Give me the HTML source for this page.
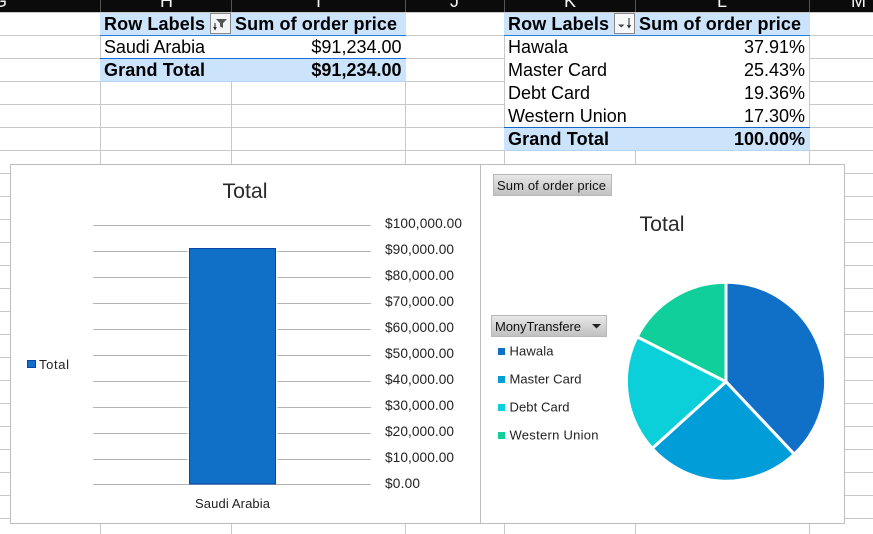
<!DOCTYPE html>
<html><head><meta charset="utf-8"><style>
html,body{margin:0;padding:0;background:#fff;width:873px;height:534px;overflow:hidden}
svg{display:block}
text{font-family:"Liberation Sans",sans-serif}
.t{font-size:18px;fill:#000}
.b{font-size:18px;font-weight:bold;fill:#000}
.h{font-size:18px;fill:#f4f4f4}
.a{font-size:13.7px;fill:#222}
.l{font-size:13px;fill:#222}
</style></head><body>
<svg width="873" height="534" viewBox="0 0 873 534" xmlns="http://www.w3.org/2000/svg">
<defs><linearGradient id="g" x1="0" y1="0" x2="0" y2="1"><stop offset="0" stop-color="#e8e8e8"/><stop offset="1" stop-color="#c0c0c0"/></linearGradient></defs>
<rect width="873" height="534" fill="#fff"/>
<g stroke="#c8c8c8" stroke-width="1" shape-rendering="crispEdges">
<path d="M0 35.5H873M0 58.5H873M0 81.5H873M0 104.5H873M0 127.5H873M0 150.5H873M0 173.5H873M0 196.5H873M0 219.5H873M0 242.5H873M0 265.5H873M0 288.5H873M0 311.5H873M0 334.5H873M0 357.5H873M0 380.5H873M0 403.5H873M0 426.5H873M0 449.5H873M0 472.5H873M0 495.5H873M0 518.5H873"/>
<path d="M100.5 13V534M231.5 13V534M405.5 13V534M504.5 13V534M635.5 13V534M809.5 13V534"/>
</g>
<rect x="0" y="0" width="873" height="12" fill="#0b0b0b"/>
<rect x="0" y="12" width="873" height="1" fill="#c8c8c8"/>
<path d="M100.5 0V12M231.5 0V12M405.5 0V12M504.5 0V12M635.5 0V12M809.5 0V12" stroke="#555" shape-rendering="crispEdges"/>
<text class="h" x="-7" y="7">G</text><text class="h" x="160" y="7">H</text><text class="h" x="316" y="7">I</text><text class="h" x="450" y="7">J</text><text class="h" x="564" y="7">K</text><text class="h" x="717" y="7">L</text><text class="h" x="851" y="7">M</text>

<!-- table 1 -->
<rect x="100" y="13" width="306" height="22" fill="#cbe3fb"/>
<rect x="101" y="36" width="305" height="22" fill="#fff"/>
<rect x="100" y="59" width="306" height="22" fill="#cbe3fb"/>
<rect x="100" y="35" width="306" height="1" fill="#2a7fe0"/>
<rect x="100" y="58" width="306" height="1" fill="#1470e0"/>
<rect x="100" y="81" width="306" height="1" fill="#b5d3f2"/>
<text class="b" x="104" y="30" textLength="101">Row Labels</text>
<text class="b" x="235" y="30" textLength="162">Sum of order price</text>
<text class="t" x="104" y="53" textLength="101">Saudi Arabia</text>
<text class="t" x="401.5" y="53" text-anchor="end">$91,234.00</text>
<text class="b" x="104" y="76" textLength="101">Grand Total</text>
<text class="b" x="401.5" y="76" text-anchor="end">$91,234.00</text>
<rect x="210.5" y="13.5" width="20" height="20" fill="#f3f4f6" stroke="#8a8a8a" shape-rendering="crispEdges"/>
<path d="M216 19h11l-4 4.2V28l-3-1.6v-3.2z" fill="#555"/>
<path d="M215 23v6M213.7 27l1.3 2.4 1.3-2.4" stroke="#222" stroke-width="1" fill="none"/>

<!-- table 2 -->
<rect x="504" y="13" width="306" height="22" fill="#cbe3fb"/>
<rect x="505" y="36" width="304" height="91" fill="#fff"/>
<rect x="504" y="128" width="306" height="22" fill="#cbe3fb"/>
<rect x="504" y="35" width="306" height="1" fill="#2a7fe0"/>
<rect x="504" y="127" width="306" height="1" fill="#1566c8"/>
<rect x="504" y="150" width="306" height="1" fill="#b5d3f2"/>
<text class="b" x="508" y="30" textLength="101">Row Labels</text>
<text class="b" x="639" y="30" textLength="162">Sum of order price</text>
<text class="t" x="508" y="53">Hawala</text><text class="t" x="805" y="53" text-anchor="end">37.91%</text>
<text class="t" x="508" y="76">Master Card</text><text class="t" x="805" y="76" text-anchor="end">25.43%</text>
<text class="t" x="508" y="99">Debt Card</text><text class="t" x="805" y="99" text-anchor="end">19.36%</text>
<text class="t" x="508" y="122">Western Union</text><text class="t" x="805" y="122" text-anchor="end">17.30%</text>
<text class="b" x="508" y="145" textLength="101">Grand Total</text><text class="b" x="805" y="145" text-anchor="end">100.00%</text>
<rect x="614.5" y="13.5" width="20" height="20" fill="#f7f8fa" stroke="#8a8a8a" shape-rendering="crispEdges"/>
<path d="M618 24.5h6.5l-3.2 3z" fill="#444"/>
<path d="M629 18v9M627.4 25l1.6 2.6 1.6-2.6" stroke="#222" stroke-width="1" fill="none"/>

<!-- chart -->
<rect x="10.5" y="164.5" width="834" height="359" fill="#fff" stroke="#bdbdbd"/>
<path d="M480.5 165V523" stroke="#bdbdbd" shape-rendering="crispEdges"/>
<text x="245" y="198" text-anchor="middle" font-size="21" fill="#2a2a2a" textLength="45" lengthAdjust="spacingAndGlyphs">Total</text>
<g stroke="#b4b4b4" stroke-width="1" shape-rendering="crispEdges">
<path d="M93 225.5H371M93 251.5H371M93 277.5H371M93 303.5H371M93 329.5H371M93 355.5H371M93 381.5H371M93 407.5H371M93 433.5H371M93 459.5H371M93 484.5H371"/>
</g>
<rect x="189.5" y="248.5" width="86" height="235.5" fill="#106fc6" stroke="#0b45a8"/>
<rect x="187" y="249" width="2" height="235" fill="#fff" opacity="0.6"/><rect x="276" y="249" width="2" height="235" fill="#fff" opacity="0.6"/>
<g>
<text class="a" x="385" y="228" textLength="77">$100,000.00</text>
<text class="a" x="385" y="254" textLength="69">$90,000.00</text>
<text class="a" x="385" y="280" textLength="69">$80,000.00</text>
<text class="a" x="385" y="306" textLength="69">$70,000.00</text>
<text class="a" x="385" y="332" textLength="69">$60,000.00</text>
<text class="a" x="385" y="358" textLength="69">$50,000.00</text>
<text class="a" x="385" y="384" textLength="69">$40,000.00</text>
<text class="a" x="385" y="410" textLength="69">$30,000.00</text>
<text class="a" x="385" y="436" textLength="69">$20,000.00</text>
<text class="a" x="385" y="462" textLength="69">$10,000.00</text>
<text class="a" x="385" y="488" textLength="35">$0.00</text>
</g>
<text class="l" x="195" y="508" textLength="75">Saudi Arabia</text>
<rect x="27.5" y="360.5" width="8" height="7" fill="#106fc6" stroke="#0b45a8"/>
<text class="l" x="39" y="369" textLength="30">Total</text>

<!-- right chart -->
<rect x="493.5" y="174.5" width="118" height="21" fill="url(#g)" stroke="#b8b8b8"/>
<text x="497" y="190" font-size="13" fill="#111" textLength="109">Sum of order price</text>
<text x="662" y="231" text-anchor="middle" font-size="21" fill="#2a2a2a" textLength="45" lengthAdjust="spacingAndGlyphs">Total</text>
<rect x="491.5" y="315.5" width="115" height="21" fill="url(#g)" stroke="#b8b8b8"/>
<text x="495" y="331" font-size="13" fill="#111" textLength="86">MonyTransfere</text>
<path d="M592 324h9l-4.5 4.5z" fill="#222"/>
<rect x="498" y="348" width="7" height="7" fill="#106fc6"/><text class="l" x="509.5" y="355.5" textLength="44">Hawala</text>
<rect x="498" y="376" width="7" height="7" fill="#009dd9"/><text class="l" x="509.5" y="383.5" textLength="72">Master Card</text>
<rect x="498" y="404" width="7" height="7" fill="#0bd0d9"/><text class="l" x="509.5" y="411.5" textLength="60">Debt Card</text>
<rect x="498" y="432" width="7" height="7" fill="#10cf9b"/><text class="l" x="509.5" y="439.5" textLength="89">Western Union</text>
<g stroke="#fff" stroke-width="3" stroke-linejoin="round">
<path d="M726 381.7V282.2A99.5 99.5 0 0 1 794.2 454.2Z" fill="#106fc6"/>
<path d="M726 381.7L794.2 454.2A99.5 99.5 0 0 1 652.2 448.4Z" fill="#009dd9"/>
<path d="M726 381.7L652.2 448.4A99.5 99.5 0 0 1 637.1 336.8Z" fill="#0bd0d9"/>
<path d="M726 381.7L637.1 336.8A99.5 99.5 0 0 1 726 282.2Z" fill="#10cf9b"/>
</g>
</svg>
</body></html>
